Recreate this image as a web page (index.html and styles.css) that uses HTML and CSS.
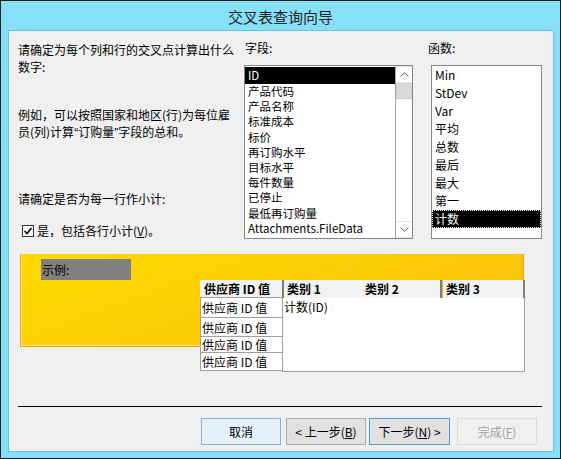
FILE: index.html
```html
<!DOCTYPE html>
<html lang="zh-CN">
<head>
    <meta charset="UTF-8" />
    <meta name="viewport" content="width=device-width, initial-scale=1.0" />
    <title>交叉表查询向导</title>
    <link rel="stylesheet" href="styles.css">
</head>
<body>
  <div class="window">
    <div class="titlebar">交叉表查询向导</div>

    <div class="client">
      <section class="top">
        <div class="intro">
          <p class="para">请确定为每个列和行的交叉点计算出什么<br>数字:</p>
          <p class="para para-example">例如，可以按照国家和地区(行)为每位雇<br>员(列)计算<span class="q">“</span>订购量<span class="q">”</span>字段的总和。</p>
          <p class="para para-subtotal">请确定是否为每一行作小计:</p>
          <label class="check">
            <span class="check-box">
              <svg width="10" height="10" viewBox="0 0 10 10"><path d="M1.5 5 L4 7.5 L8.5 2" fill="none" stroke="#000" stroke-width="1.6"/></svg>
            </span>
            <span>是，包括各行小计(<u>V</u>)。</span>
          </label>
        </div>

        <div class="fields">
          <div class="caption">字段:</div>
          <div class="listbox field-list">
            <ul class="items">
              <li class="selected first">ID</li>
              <li>产品代码</li>
              <li>产品名称</li>
              <li>标准成本</li>
              <li>标价</li>
              <li>再订购水平</li>
              <li>目标水平</li>
              <li>每件数量</li>
              <li>已停止</li>
              <li>最低再订购量</li>
              <li>Attachments.FileData</li>
            </ul>
            <div class="scrollbar">
              <div class="sb-btn">
                <svg width="9" height="5" viewBox="0 0 9 5"><path d="M0.5 4.5 L4.5 0.8 L8.5 4.5" fill="none" stroke="#606060"/></svg>
              </div>
              <div class="sb-thumb"></div>
              <div class="sb-track"></div>
              <div class="sb-btn">
                <svg width="9" height="5" viewBox="0 0 9 5"><path d="M0.5 0.5 L4.5 4.2 L8.5 0.5" fill="none" stroke="#606060"/></svg>
              </div>
            </div>
          </div>
        </div>

        <div class="functions">
          <div class="caption">函数:</div>
          <ul class="listbox func-list">
            <li>Min</li>
            <li>StDev</li>
            <li>Var</li>
            <li>平均</li>
            <li>总数</li>
            <li>最后</li>
            <li>最大</li>
            <li>第一</li>
            <li class="selected focused">计数</li>
          </ul>
        </div>
      </section>

      <section class="example">
        <div class="sample">
          <span class="sample-tag">示例:</span>
        </div>

        <div class="preview">
          <div class="rowheads">
            <div class="rh head">供应商 ID 值</div>
            <div class="rh">供应商 ID 值</div>
            <div class="rh">供应商 ID 值</div>
            <div class="rh short">供应商 ID 值</div>
            <div class="rh last">供应商 ID 值</div>
          </div>
          <div class="data">
            <div class="colheads">
              <div class="ch ch-1">类别 1</div>
              <div class="ch ch-2">类别 2</div>
              <div class="ch ch-3">类别 3</div>
            </div>
            <div class="cells">计数(ID)</div>
          </div>
        </div>
      </section>

      <hr class="divider">

      <div class="buttons">
        <button class="btn btn-cancel">取消</button>
        <button class="btn btn-back">&lt; 上一步(<u>B</u>)</button>
        <button class="btn btn-next">下一步(<u>N</u>) &gt;</button>
        <button class="btn btn-finish">完成(<u>F</u>)</button>
      </div>
    </div>
  </div>
</body>
</html>
```

FILE: styles.css
```css
* {
    margin: 0;
    padding: 0;
    box-sizing: border-box;
}

body {
    font-family: "Noto Sans CJK SC", "Noto Sans", sans-serif;
    font-size: 12px;
    color: #000;
    width: 561px;
    height: 459px;
    overflow: hidden;
}

.window {
    width: 561px;
    height: 459px;
    border: 1px solid #1c1c1c;
    background: #86e1f8;
    display: flex;
    flex-direction: column;
}

.titlebar {
    height: 29px;
    display: flex;
    align-items: center;
    justify-content: center;
    font-size: 15px;
    color: #222;
    padding-top: 1px;
}

.client {
    flex: 1;
    margin: 0 6px 6px 7px;
    border: 1px solid #62c5e4;
    background: #f0f0f0;
    padding: 10px 11px 6px 9px;
    display: flex;
    flex-direction: column;
}

/* top: text, field list, function list */
.top {
    display: flex;
    height: 198px;
}

.intro {
    width: 227px;
}

.para {
    line-height: 17px;
}

    .para .q {
        font-family: "Liberation Sans", sans-serif;
    }

.para-example {
    margin-top: 31px;
}

.para-subtotal {
    margin-top: 48px;
}

.check {
    display: flex;
    align-items: center;
    margin-top: 15px;
    margin-left: 4px;
    line-height: 17px;
    gap: 3px;
}

    .check-box {
        width: 12px;
        height: 12px;
        border: 1px solid #333;
        background: #fff;
        display: flex;
        align-items: center;
        justify-content: center;
    }

.caption {
    line-height: 14px;
    height: 24px;
    padding-left: 1px;
}

.listbox {
    list-style: none;
    background: #fff;
    border: 1px solid #828790;
    height: 174px;
    overflow: hidden;
}

    .listbox li {
        white-space: nowrap;
        padding-left: 3px;
    }

    .listbox .selected {
        background: #000;
        color: #fff;
    }

.fields {
    width: 169px;
}

.field-list {
    display: flex;
}

    .field-list .items {
        list-style: none;
        width: 151px;
        padding-top: 1px;
        font-size: 11.5px;
    }

    .field-list li {
        height: 15.2px;
        line-height: 15px;
    }

        .field-list li.first {
            height: 17px;
            line-height: 17px;
        }

.scrollbar {
    width: 17px;
    border-left: 1px solid #a6a6a6;
    display: flex;
    flex-direction: column;
}

.sb-btn {
    height: 17px;
    display: flex;
    align-items: center;
    justify-content: center;
    border-top: 1px solid #e6e6e6;
    border-bottom: 1px solid #e6e6e6;
}

.sb-thumb {
    height: 16px;
    background: #dadada;
    border: 1px solid #cdcdcd;
}

.sb-track {
    flex: 1;
}

.functions {
    width: 115px;
    margin-left: 14px;
}

.func-list {
    width: 111px;
    margin-left: 4px;
}

    .func-list li {
        height: 18px;
        line-height: 18px;
    }

    .func-list .focused {
        outline: 1px dotted #fff;
        outline-offset: -1px;
    }

/* example preview */
.example {
    position: relative;
    margin-top: 15px;
    margin-left: 2px;
    width: 506px;
    height: 118px;
}

.sample {
    width: 504px;
    height: 93px;
    border: 1px solid #f5a200;
    border-top: none;
    box-shadow: inset 1px -1px 0 #ffe88a;
    background:
        linear-gradient(135deg, transparent 56%, rgba(255, 255, 255, 0.12) 56.3%, transparent 56.8%),
        linear-gradient(45deg, transparent 62%, rgba(255, 255, 255, 0.1) 62.3%, transparent 62.8%),
        linear-gradient(160deg, #ffd900, #fccb06 55%, #f9bb12);
    padding: 5px 0 0 20px;
}

.sample-tag {
    display: block;
    width: 90px;
    height: 21px;
    line-height: 21px;
    background: #808080;
    padding-left: 1px;
}

.preview {
    position: absolute;
    left: 180px;
    top: 26px;
    display: flex;
}

.rowheads {
    width: 82px;
}

.rh {
    height: 20px;
    line-height: 19px;
    background: #fff;
    border-left: 1px solid #a0a0a0;
    border-top: 1px solid #a0a0a0;
    padding-left: 1px;
    white-space: nowrap;
}

    .rh.head {
        height: 17px;
        line-height: 17px;
        border: none;
        background: #f2f2f2;
        font-weight: bold;
        padding-left: 4px;
    }

    .rh:nth-child(3) {
        height: 19px;
    }

    .rh.short {
        height: 16px;
        line-height: 15px;
    }

    .rh.last {
        height: 19px;
        line-height: 17px;
        border-bottom: 1px solid #a0a0a0;
    }

.data {
    width: 243px;
}

.colheads {
    display: flex;
    height: 18px;
}

.ch {
    background: #f2f2f2;
    font-weight: bold;
    line-height: 18px;
    padding-left: 3px;
}

.ch-1 {
    width: 80px;
    border-left: 2px solid #7d7d7d;
    border-right: 1px solid #fff;
}

.ch-2 {
    width: 80px;
    border-right: 2px solid #7d7d7d;
}

.ch-3 {
    width: 83px;
    border-left: 1px solid #f6b400;
    border-right: 2px solid #7d7d7d;
}

.cells {
    height: 74px;
    background: #fff;
    border: 1px solid #a0a0a0;
    border-top: none;
    line-height: 17px;
    padding-left: 1px;
}

/* bottom */
.divider {
    border: none;
    border-top: 1px solid #000;
    margin-top: 34px;
    width: 524px;
}

.buttons {
    display: flex;
    margin-top: 11px;
    padding-left: 183px;
}

.btn {
    font-family: inherit;
    font-size: 12px;
    width: 80px;
    height: 27px;
    background: #e1e1e1;
    border: 1px solid #adadad;
    color: #000;
}

.btn-cancel {
    background: #e5f1fb;
    border-color: #7eb4ea;
}

.btn-back {
    margin-left: 5px;
}

.btn-next {
    width: 81px;
    margin-left: 3px;
    border-color: #4d9be8;
}

.btn-finish {
    margin-left: 7px;
    background: #f0f0f0;
    border-color: #d9d9d9;
    color: #a0a0a0;
}
```
